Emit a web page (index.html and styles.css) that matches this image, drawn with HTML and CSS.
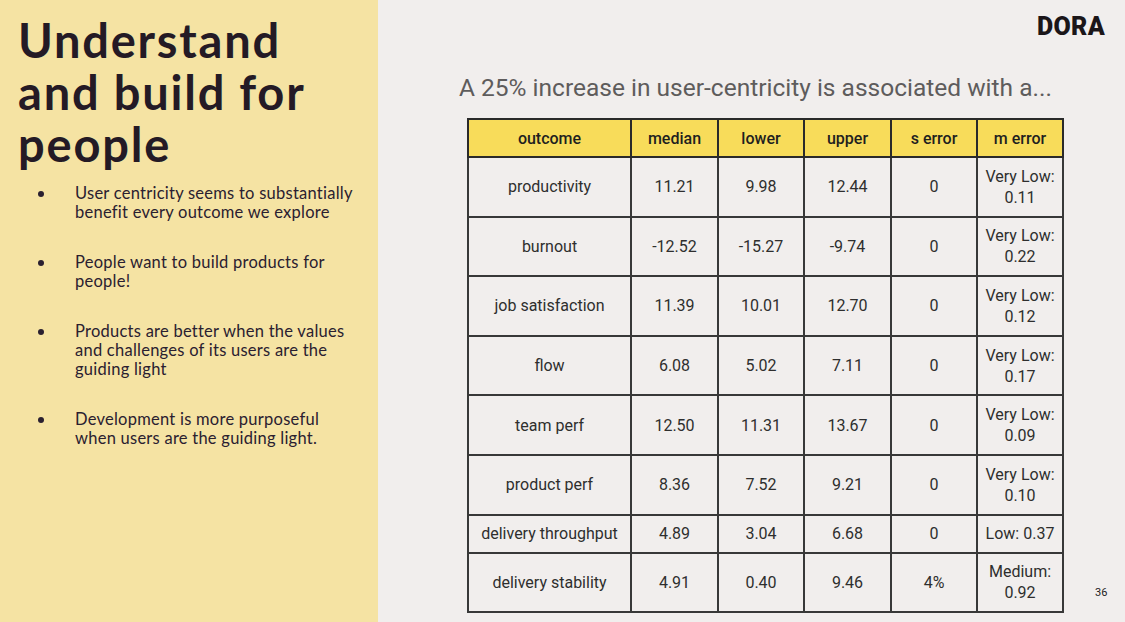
FILE: index.html
```html
<!DOCTYPE html>
<html>
<head>
<meta charset="utf-8">
<link rel="stylesheet" href="styles.css">
</head>
<body>
<div class="slide">
  <aside class="left">
    <h1 class="title">Understand and build for people</h1>
    <ul class="bullets">
      <li>User centricity seems to substantially benefit every outcome we explore</li>
      <li>People want to build products for people!</li>
      <li>Products are better when the values and challenges of its users are the guiding light</li>
      <li>Development is more purposeful when users are the guiding light.</li>
    </ul>
  </aside>
  <main class="right">
    <div class="topbar"><span class="logo">DORA</span></div>
    <h2 class="subtitle">A 25% increase in user-centricity is associated with a...</h2>
    <div class="tablerow">
      <table class="data">
        <colgroup>
          <col class="c1"><col class="c2"><col class="c3"><col class="c4"><col class="c5"><col class="c6">
        </colgroup>
        <thead>
          <tr><th>outcome</th><th>median</th><th>lower</th><th>upper</th><th>s error</th><th>m error</th></tr>
        </thead>
        <tbody>
          <tr class="tall"><td>productivity</td><td>11.21</td><td>9.98</td><td>12.44</td><td>0</td><td>Very Low:<br>0.11</td></tr>
          <tr class="tall"><td>burnout</td><td>-12.52</td><td>-15.27</td><td>-9.74</td><td>0</td><td>Very Low:<br>0.22</td></tr>
          <tr class="tall"><td>job satisfaction</td><td>11.39</td><td>10.01</td><td>12.70</td><td>0</td><td>Very Low:<br>0.12</td></tr>
          <tr class="tall"><td>flow</td><td>6.08</td><td>5.02</td><td>7.11</td><td>0</td><td>Very Low:<br>0.17</td></tr>
          <tr class="tall"><td>team perf</td><td>12.50</td><td>11.31</td><td>13.67</td><td>0</td><td>Very Low:<br>0.09</td></tr>
          <tr class="tall"><td>product perf</td><td>8.36</td><td>7.52</td><td>9.21</td><td>0</td><td>Very Low:<br>0.10</td></tr>
          <tr class="short"><td>delivery throughput</td><td>4.89</td><td>3.04</td><td>6.68</td><td>0</td><td>Low: 0.37</td></tr>
          <tr class="tall"><td>delivery stability</td><td>4.91</td><td>0.40</td><td>9.46</td><td>4%</td><td>Medium:<br>0.92</td></tr>
        </tbody>
      </table>
      <span class="pagenum">36</span>
    </div>
  </main>
</div>
</body>
</html>
```

FILE: styles.css
```css
html, body {
  margin: 0;
  padding: 0;
}
body {
  width: 1125px;
  height: 622px;
  overflow: hidden;
  background: #f1eeed;
}
.slide {
  display: flex;
  width: 1125px;
  height: 622px;
}
.left {
  width: 378px;
  flex: none;
  background: #f5e3a3;
  padding: 14px 0 0 18px;
  box-sizing: border-box;
  color: #241a25;
  font-family: "Lato", "Open Sans", sans-serif;
}
.title {
  margin: 0;
  font-size: 47px;
  font-weight: 700;
  line-height: 52px;
  letter-spacing: 1.8px;
  width: 340px;
}
.bullets {
  margin: 14px 0 0 0;
  padding: 0 0 0 20px;
  list-style: none;
  font-size: 16.5px;
  line-height: 19px;
  letter-spacing: 0.25px;
  color: #2a2030;
}
.bullets li {
  position: relative;
  padding-left: 37px;
  margin-bottom: 31px;
  width: 280px;
}
.bullets li::before {
  content: "";
  position: absolute;
  left: 0;
  top: 7px;
  width: 6px;
  height: 6px;
  border-radius: 50%;
  background: #2a2030;
}
.right {
  flex: 1;
  min-width: 0;
  display: flex;
  flex-direction: column;
  padding: 0 20px 0 89px;
  font-family: "Roboto", "Liberation Sans", sans-serif;
}
.topbar {
  display: flex;
  justify-content: flex-end;
  height: 50px;
  padding-top: 13px;
  box-sizing: border-box;
}
.logo {
  font-family: "Roboto", sans-serif;
  font-weight: 900;
  font-size: 25px;
  line-height: 28px;
  color: #1b1619;
  letter-spacing: 0.3px;
}
.subtitle {
  margin: 0 0 0 -8px;
  font-weight: 400;
  font-size: 24.5px;
  line-height: 30px;
  color: #5e5c5c;
  height: 30px;
  padding-top: 23px;
  white-space: nowrap;
}
.tablerow {
  display: flex;
  align-items: flex-end;
  margin-top: 15px;
}
.data {
  border-collapse: collapse;
  width: 595px;
  flex: none;
  table-layout: fixed;
  font-size: 16px;
  color: #2e2e2e;
}
.data th, .data td {
  border: 2px solid #383838;
  text-align: center;
  padding: 0 1px;
}
.data th {
  background: #f8dc5a;
  height: 36px;
  font-weight: 500;
  color: #1f1f1f;
  border-color: #2a2a2a;
}
.data td {
  line-height: 21px;
}
.data tr.tall td { height: 57.6px; }
.data tr.short td { height: 36px; }
.c1 { width: 163px; }
.c2 { width: 87px; }
.c3 { width: 86px; }
.c4 { width: 87px; }
.c5 { width: 86px; }
.c6 { width: 86px; }
.pagenum {
  margin-left: 31px;
  margin-bottom: 14px;
  font-size: 11px;
  color: #222;
}
```
